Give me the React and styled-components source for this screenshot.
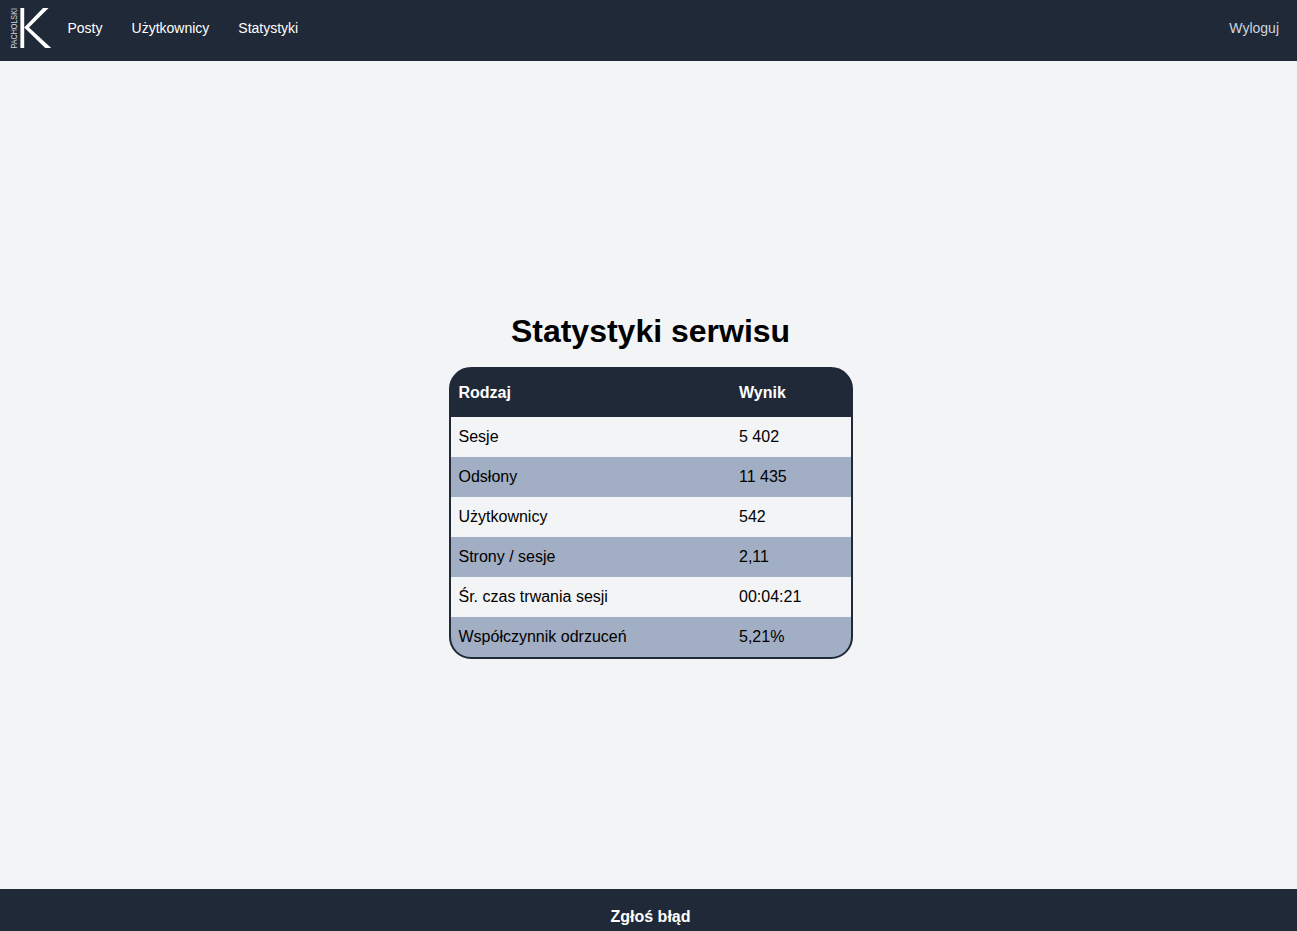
import React from "react";
import styled, { createGlobalStyle } from "styled-components";

const Global = createGlobalStyle`
  html, body { margin: 0; padding: 0; height: 100%; }
  body { font-family: "Liberation Sans", Arial, sans-serif; background: #f3f4f6; color: #000; }
  #root { height: 100%; }
`;
const Page = styled.div`
  height: 931px;
  display: flex;
  flex-direction: column;
  overflow: hidden;
`;
const NavBar = styled.nav`
  height: 61px;
  flex: none;
  background: #1f2937;
  display: flex;
  align-items: center;
  justify-content: space-between;
  padding: 0 18px 5px 10px;
  box-sizing: border-box;
`;
const NavLeft = styled.div`
  display: flex;
  align-items: center;
`;
const Logo = styled.div`
  display: flex;
  align-items: center;
  gap: 2px;
  height: 40px;
  margin-right: 15.5px;
`;
const LogoText = styled.span`
  writing-mode: vertical-rl;
  transform: rotate(180deg) scaleY(0.83);
  font-family: "Liberation Sans", sans-serif;
  font-size: 8.6px;
  line-height: 8px;
  width: 8px;
  white-space: nowrap;
  color: #d5d7db;
`;
const LogoMark = styled.svg`
  width: 32px;
  height: 40px;
  display: block;
`;
const NavLinks = styled.div`
  display: flex;
  gap: 29px;
`;
const NavLink = styled.a`
  color: ${(p) => (p.$muted ? "#d1d5db" : "#fff")};
  font-size: 14px;
  line-height: 20px;
  text-decoration: none;
`;
const Main = styled.main`
  flex: 1;
  display: flex;
  flex-direction: column;
  align-items: center;
  justify-content: center;
  padding: 19px 0 0 4px;
  box-sizing: border-box;
`;
const Title = styled.h1`
  margin: 0 0 16px;
  font-size: 32px;
  line-height: 40px;
  font-weight: 700;
  color: #000;
`;
const TableFrame = styled.div`
  width: 404px;
  box-sizing: border-box;
  border: 2px solid #1f2937;
  border-radius: 22px;
  background: #1f2937;
  overflow: hidden;
`;
const Table = styled.table`
  width: 100%;
  border-collapse: collapse;
  table-layout: fixed;
  font-size: 16px;
`;
const HeadRow = styled.tr`
  height: 48px;
  background: #1f2937;
  color: #fff;
`;
const HeadCell = styled.th`
  padding: 0 8px;
  text-align: left;
  font-weight: 700;
  box-sizing: border-box;
  width: ${(p) => p.$w || "auto"};
`;
const Row = styled.tr`
  height: 40px;
  background: ${(p) => (p.$alt ? "#a1aec4" : "#f3f4f6")};
`;
const Cell = styled.td`
  padding: 0 8px;
`;
const Footer = styled.footer`
  height: 42px;
  flex: none;
  box-sizing: border-box;
  background: #1f2937;
  color: #fff;
  font-weight: 700;
  font-size: 16px;
  display: flex;
  justify-content: center;
  align-items: center;
  padding: 14px 0 0 4px;
`;

const rows = [
  ["Sesje", "5 402"],
  ["Odsłony", "11 435"],
  ["Użytkownicy", "542"],
  ["Strony / sesje", "2,11"],
  ["Śr. czas trwania sesji", "00:04:21"],
  ["Współczynnik odrzuceń", "5,21%"],
];

export default function App() {
  return (
    <Page>
      <Global />
      <NavBar>
        <NavLeft>
          <Logo>
            <LogoText>PACHOLSKI</LogoText>
            <LogoMark viewBox="0 0 32 40">
              <rect x="0.4" y="0" width="3.8" height="40" fill="#fff" />
              <path d="M4.2 19.6 L23 0 H28.6 L9 19.4 L31.2 40 H25.2 Z" fill="#fff" />
            </LogoMark>
          </Logo>
          <NavLinks>
            <NavLink>Posty</NavLink>
            <NavLink>Użytkownicy</NavLink>
            <NavLink>Statystyki</NavLink>
          </NavLinks>
        </NavLeft>
        <NavLink $muted>Wyloguj</NavLink>
      </NavBar>
      <Main>
        <Title>Statystyki serwisu</Title>
        <TableFrame>
          <Table>
            <thead>
              <HeadRow>
                <HeadCell $w="280.5px">Rodzaj</HeadCell>
                <HeadCell>Wynik</HeadCell>
              </HeadRow>
            </thead>
            <tbody>
              {rows.map(([k, v], i) => (
                <Row key={k} $alt={i % 2 === 1}>
                  <Cell>{k}</Cell>
                  <Cell>{v}</Cell>
                </Row>
              ))}
            </tbody>
          </Table>
        </TableFrame>
      </Main>
      <Footer>Zgłoś błąd</Footer>
    </Page>
  );
}
